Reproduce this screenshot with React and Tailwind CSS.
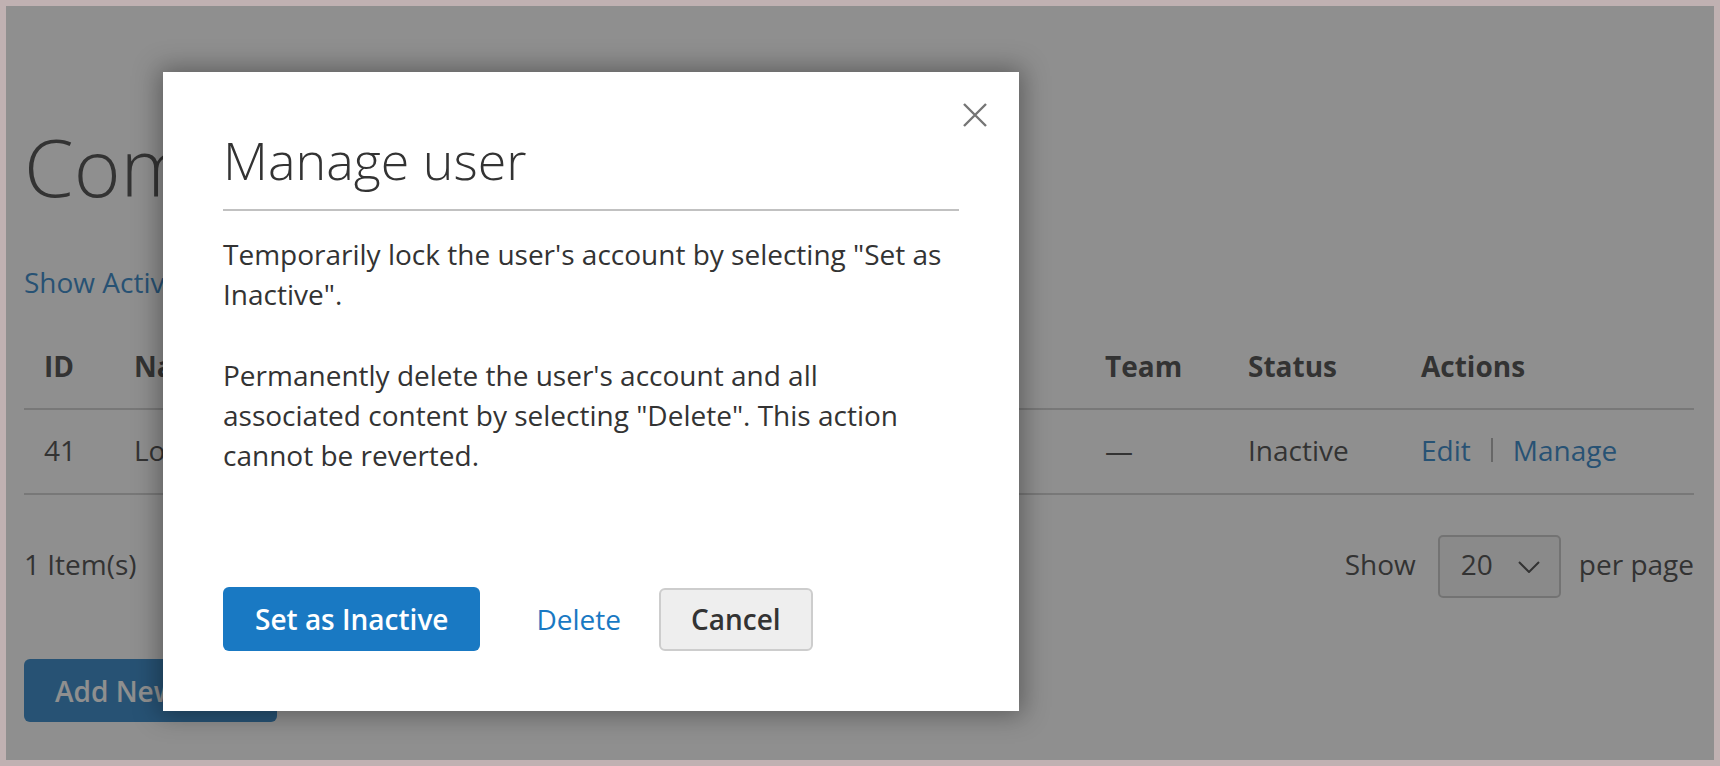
import React from "react";

function CloseIcon() {
  return (
    <svg width="24" height="24" viewBox="0 0 24 24" fill="none">
      <path d="M1 1L23 23M23 1L1 23" stroke="#757575" strokeWidth="2.4" />
    </svg>
  );
}

function Chevron() {
  return (
    <svg width="22" height="12" viewBox="0 0 22 12" fill="none">
      <path d="M1 1L11 11L21 1" stroke="#333333" strokeWidth="2" />
    </svg>
  );
}

export default function App() {
  return (
    <div className="w-full h-[766px] bg-[#c0b1b2] p-[6px] font-['Open_Sans',sans-serif] text-[#333333]">
      <div className="relative h-full bg-white overflow-hidden pl-[18px] pr-[20px] pt-[116px]">
        <h1 className="text-[80px] leading-[88px] font-light whitespace-nowrap">Company Users</h1>

        <div className="mt-[52px] text-[28px] leading-[40px] whitespace-nowrap flex gap-[16px]">
          <a className="text-[#1979c3]">Show Active Users</a>
          <span className="text-[#a6a6a6]">|</span>
          <a className="text-[#1979c3]">Show Inactive Users</a>
          <span className="text-[#a6a6a6]">|</span>
          <a className="text-[#1979c3]">Show All Users</a>
        </div>

        <table className="mt-[22px] w-full table-fixed border-collapse text-[28px] leading-[40px]">
          <colgroup>
            <col className="w-[90px]" />
            <col className="w-[300px]" />
            <col className="w-[370px]" />
            <col className="w-[301px]" />
            <col className="w-[143px]" />
            <col className="w-[173px]" />
            <col />
          </colgroup>
          <thead>
            <tr className="border-b-2 border-[#cccccc]">
              <th className="text-left font-bold px-[20px] py-[22px]">ID</th>
              <th className="text-left font-bold px-[20px] py-[22px]">Name</th>
              <th className="text-left font-bold px-[20px] py-[22px]">Email</th>
              <th className="text-left font-bold px-[20px] py-[22px]">Role</th>
              <th className="text-left font-bold px-[20px] py-[22px]">Team</th>
              <th className="text-left font-bold px-[20px] py-[22px]">Status</th>
              <th className="text-left font-bold px-[20px] py-[22px]">Actions</th>
            </tr>
          </thead>
          <tbody>
            <tr className="border-b-2 border-[#cccccc]">
              <td className="px-[20px] pt-[20px] pb-[23px]">41</td>
              <td className="px-[20px] pt-[20px] pb-[23px] whitespace-nowrap">Lorem Ipsum</td>
              <td className="px-[20px] pt-[20px] pb-[23px] whitespace-nowrap">lorem@example.com</td>
              <td className="px-[20px] pt-[20px] pb-[23px] whitespace-nowrap">Default User</td>
              <td className="px-[20px] pt-[20px] pb-[23px]">—</td>
              <td className="px-[20px] pt-[20px] pb-[23px]">Inactive</td>
              <td className="px-[20px] pt-[20px] pb-[23px]">
                <div className="flex items-center whitespace-nowrap">
                  <a className="text-[#1979c3]">Edit</a>
                  <span className="mx-[20px] w-[2px] h-[24px] bg-[#a6a6a6]"></span>
                  <a className="text-[#1979c3]">Manage</a>
                </div>
              </td>
            </tr>
          </tbody>
        </table>

        <div className="mt-[40px] flex items-center justify-between text-[28px] leading-[40px]">
          <span className="pb-[5px]">1 Item(s)</span>
          <div className="flex items-center">
            <span className="pb-[5px]">Show</span>
            <div className="ml-[22px] w-[123px] h-[63px] rounded-[5px] border-2 border-[#c2c2c2] bg-[#f4f4f4] flex items-center justify-between pl-[21px] pr-[19px]">
              <span className="pb-[5px]">20</span>
              <Chevron />
            </div>
            <span className="ml-[18px] pb-[5px]">per page</span>
          </div>
        </div>

        <button className="mt-[61px] h-[63px] px-[31px] rounded-[6px] bg-[#1979c3] text-white text-[28px] font-semibold leading-[40px]">
          Add New User
        </button>

        <div className="absolute inset-0 bg-[rgba(51,51,51,0.55)]">
          <div className="relative ml-[157px] mt-[66px] w-[856px] h-[639px] bg-white shadow-[0_0_24px_4px_rgba(0,0,0,0.35)] flex flex-col px-[60px] pt-[57px] pb-[60px]">
            <button className="absolute top-[31px] right-[32px] w-[24px] h-[24px]">
              <CloseIcon />
            </button>
            <h2 className="text-[52px] leading-[62px] font-light pb-[18px] border-b-2 border-[#c1c1c1]">Manage user</h2>
            <div className="text-[28px] leading-[40px] mt-[23px]">
              <p>Temporarily lock the user's account by selecting "Set as Inactive".</p>
              <p className="mt-[41px]">
                Permanently delete the user's account and all associated content by selecting "Delete". This action cannot be reverted.
              </p>
            </div>
            <div className="mt-auto flex items-center text-[28px] leading-[40px]">
              <button className="h-[64px] px-[32px] rounded-[6px] bg-[#1979c3] text-white font-semibold">Set as Inactive</button>
              <a className="ml-[56px] text-[#1979c3]">Delete</a>
              <button className="ml-[38px] h-[63px] px-[30px] rounded-[6px] bg-[#eeeeee] border-2 border-[#cdcdcd] font-semibold text-[#333333]">Cancel</button>
            </div>
          </div>
        </div>
      </div>
    </div>
  );
}
